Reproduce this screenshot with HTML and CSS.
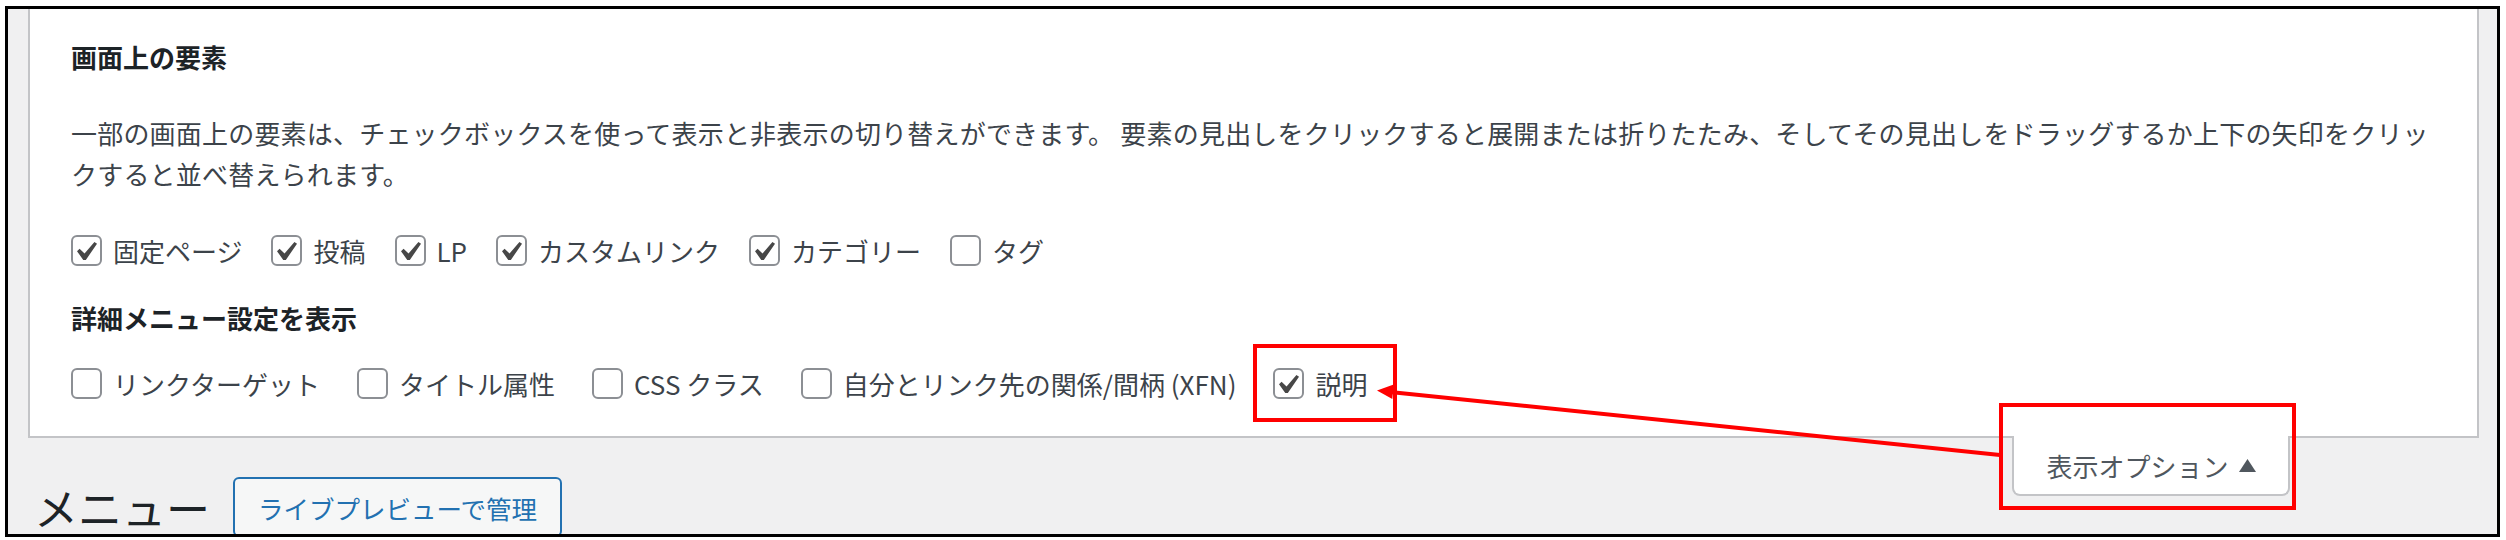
FILE: index.html
```html
<!DOCTYPE html>
<html lang="ja">
<head>
<meta charset="utf-8">
<title>メニュー</title>
<link rel="stylesheet" href="styles.css">
</head>
<body>
<div class="frame">
  <div class="screen">
    <section class="panel">
      <h5 class="panel-title">画面上の要素</h5>
      <p class="panel-desc">一部の画面上の要素は、チェックボックスを使って表示と非表示の切り替えができます。 要素の見出しをクリックすると展開または折りたたみ、そしてその見出しをドラッグするか上下の矢印をクリックすると並べ替えられます。</p>
      <div class="prefs prefs-boxes">
        <label class="pref"><span class="cb"><svg viewBox="3.69 2.29 14.03 14.03"><path d="M14.83 4.89l1.34.94-5.81 8.38H9.02L5.78 9.67l1.34-1.25 2.57 2.4z"/></svg></span>固定ページ</label>
        <label class="pref"><span class="cb"><svg viewBox="3.69 2.29 14.03 14.03"><path d="M14.83 4.89l1.34.94-5.81 8.38H9.02L5.78 9.67l1.34-1.25 2.57 2.4z"/></svg></span>投稿</label>
        <label class="pref"><span class="cb"><svg viewBox="3.69 2.29 14.03 14.03"><path d="M14.83 4.89l1.34.94-5.81 8.38H9.02L5.78 9.67l1.34-1.25 2.57 2.4z"/></svg></span>LP</label>
        <label class="pref"><span class="cb"><svg viewBox="3.69 2.29 14.03 14.03"><path d="M14.83 4.89l1.34.94-5.81 8.38H9.02L5.78 9.67l1.34-1.25 2.57 2.4z"/></svg></span>カスタムリンク</label>
        <label class="pref"><span class="cb"><svg viewBox="3.69 2.29 14.03 14.03"><path d="M14.83 4.89l1.34.94-5.81 8.38H9.02L5.78 9.67l1.34-1.25 2.57 2.4z"/></svg></span>カテゴリー</label>
        <label class="pref"><span class="cb"></span>タグ</label>
      </div>
      <h5 class="panel-title sub">詳細メニュー設定を表示</h5>
      <div class="prefs prefs-advanced">
        <label class="pref"><span class="cb"></span>リンクターゲット</label>
        <label class="pref"><span class="cb"></span>タイトル属性</label>
        <label class="pref"><span class="cb"></span>CSS クラス</label>
        <label class="pref"><span class="cb"></span>自分とリンク先の関係/間柄 (XFN)</label>
        <label class="pref"><span class="cb"><svg viewBox="3.69 2.29 14.03 14.03"><path d="M14.83 4.89l1.34.94-5.81 8.38H9.02L5.78 9.67l1.34-1.25 2.57 2.4z"/></svg></span>説明</label>
      </div>
    </section>
    <div class="page-head">
      <div class="title-group">
        <h1 class="page-title">メニュー</h1>
        <a class="title-action" href="#">ライブプレビューで管理</a>
      </div>
      <button class="screen-tab" type="button">表示オプション<svg class="tri" viewBox="0 0 17 13"><polygon points="8.5,0 17,13 0,13"/></svg></button>
    </div>
  </div>
</div>
<svg class="annot" viewBox="0 0 2506 540" width="2506" height="540">
  <rect x="1255" y="346" width="140" height="74" fill="none" stroke="#ff0000" stroke-width="4"/>
  <rect x="2001" y="405" width="293" height="103" fill="none" stroke="#ff0000" stroke-width="4"/>
  <line x1="2000" y1="455" x2="1390" y2="392" stroke="#ff0000" stroke-width="4"/>
  <polygon points="1377,390.5 1393.7,384.5 1392.3,399" fill="#ff0000"/>
</svg>
</body>
</html>
```

FILE: styles.css
```css
html, body {
  margin: 0;
  padding: 0;
}

body {
  position: relative;
  width: 2506px;
  height: 540px;
  overflow: hidden;
  background: #ffffff;
  font-family: "Noto Sans CJK JP", "Noto Sans", sans-serif;
  color: #3c434a;
}

.frame {
  box-sizing: border-box;
  width: 2495px;
  height: 531px;
  margin: 6px 0 0 5px;
  border: 3px solid #000000;
  background: #f0f0f1;
  overflow: hidden;
}

.panel {
  margin: 0 18px 0 20px;
  background: #ffffff;
  border: 2px solid #c3c4c7;
  border-top: 0;
  padding: 28px 30px 32px 41px;
}

.panel-title {
  margin: 0;
  font-size: 26px;
  line-height: 40px;
  font-weight: 700;
  color: #1d2327;
}

.panel-title.sub {
  margin-top: 27px;
}

.panel-desc {
  margin: 35px 0 0;
  font-size: 26px;
  line-height: 41px;
  letter-spacing: 0.2px;
  color: #3c434a;
}

.prefs {
  display: flex;
  align-items: center;
  height: 41px;
}

.prefs-boxes {
  margin-top: 36px;
  gap: 29px;
}

.prefs-advanced {
  margin-top: 25px;
  gap: 37px;
}

.pref {
  display: flex;
  align-items: center;
  gap: 11px;
  font-size: 26px;
  line-height: 41px;
  color: #3c434a;
  white-space: nowrap;
}

.cb {
  box-sizing: border-box;
  display: flex;
  width: 31px;
  height: 31px;
  flex: none;
  border: 2px solid #8c8f94;
  border-radius: 6px;
  background: #ffffff;
}

.cb svg {
  width: 27px;
  height: 27px;
  fill: #474747;
}

.page-head {
  display: flex;
  align-items: flex-start;
}

.title-group {
  display: flex;
  align-items: center;
  gap: 23px;
  height: 60px;
  margin: 39px 0 0 26px;
}

.page-title {
  margin: 0;
  font-size: 44px;
  font-weight: 400;
  line-height: 46px;
  color: #1d2327;
}

.title-action {
  box-sizing: border-box;
  display: flex;
  align-items: center;
  height: 60px;
  padding: 0 23px;
  border: 2px solid #2271b1;
  border-radius: 6px;
  background: #f6f7f7;
  color: #2271b1;
  font-size: 25.5px;
  text-decoration: none;
}

.screen-tab {
  box-sizing: border-box;
  display: flex;
  align-items: center;
  justify-content: center;
  gap: 10px;
  width: 278px;
  height: 60px;
  margin: -2px 207px 0 auto;
  padding: 0;
  border: 2px solid #c3c4c7;
  border-top: 0;
  border-radius: 0 0 8px 8px;
  background: #ffffff;
  font-family: inherit;
  font-size: 26px;
  color: #50575e;
}

.tri {
  width: 17px;
  height: 13px;
  fill: #50575e;
}

.annot {
  position: absolute;
  top: 0;
  left: 0;
  pointer-events: none;
}
```
